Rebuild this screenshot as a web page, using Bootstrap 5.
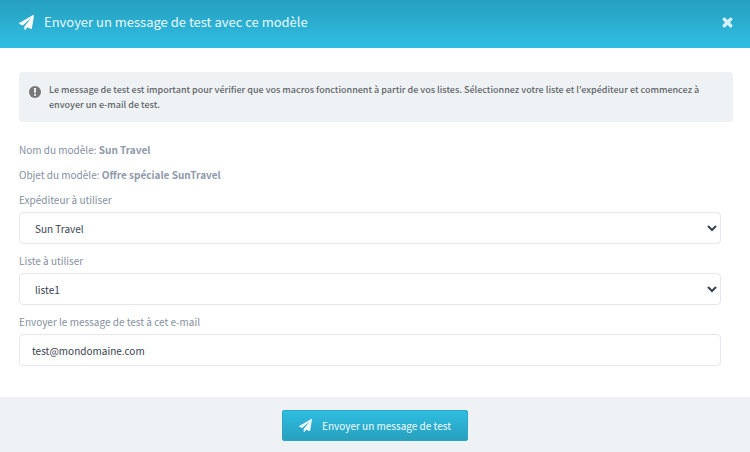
<!DOCTYPE html>
<html lang="fr">
<head>
<meta charset="utf-8">
<meta name="viewport" content="width=device-width, initial-scale=1">
<title>Envoyer un message de test</title>
<link href="https://cdn.jsdelivr.net/npm/bootstrap@5.3.0/dist/css/bootstrap.min.css" rel="stylesheet">
<style>
body { font-family: "Noto Sans CJK SC", "Noto Sans", sans-serif; font-size: 10px; color: #8590a2; background: #fff; }
.dialog-head { height: 48px; padding: 0 17px 4px 19px; background: linear-gradient(#269fbe, #2fbee4); color: #fff; }
.dialog-title { font-size: 13px; line-height: 20px; font-weight: 400; margin: 0 0 0 10px; color: #eaf8fc; }
.close-btn { line-height: 0; color: #d5f2fa; }
.dialog-body { padding: 24px 17px 31px 19px; }
.notice { background: #eef2f5; color: #63666a; border-radius: 4px; padding: 10px 24px 10px 10px; margin-bottom: 15px; font-size: 9px; font-weight: 500; line-height: 15px; }
.notice svg { color: #777; margin-top: 4px; }
.fields { margin-right: 12px; }
.line { line-height: 25px; }
.line strong { font-weight: 700; color: #8f9aab; }
.field { height: 32px; font: inherit; color: #39424f; border: 1px solid #e4e7ed; border-radius: 4px; padding: 0 12px; margin-bottom: 4px; }
select.field { -webkit-appearance: auto; appearance: auto; padding: 0 0 0 11px; }
.dialog-foot { background: #eef2f5; padding: 13px 0; min-height: 55px; }
.send-btn { height: 31px; gap: 10px; font-size: 10px; line-height: 20px; padding: 0 17px; border: 0; border-radius: 3px; color: #f2fcfe; background: linear-gradient(#2fbee2, #289fbd); box-shadow: inset 0 0 0 1px #2ba7c6; }
.send-btn:hover { color: #fff; }
</style>
<script src="https://cdn.jsdelivr.net/npm/bootstrap@5.3.0/dist/js/bootstrap.bundle.min.js"></script>
</head>
<body>
<svg class="d-none" xmlns="http://www.w3.org/2000/svg">
  <symbol id="plane" viewBox="0 0 1792 1792"><path fill="currentColor" d="M1764 11q33 24 27 64l-256 1536q-5 29-32 45-14 8-31 8-11 0-24-5l-453-185-242 295q-18 23-49 23-13 0-22-4-19-7-30.500-23.500T640 1728v-349l864-1059-1069 925-395-162q-37-14-40-55-2-40 32-59L1696 9q15-9 32-9 20 0 36 11z"/></symbol>
</svg>
<header class="dialog-head d-flex align-items-center">
  <svg width="15" height="15" aria-hidden="true"><use href="#plane"/></svg>
  <h1 class="dialog-title flex-grow-1">Envoyer un message de test avec ce modèle</h1>
  <button type="button" class="close-btn btn border-0 p-0" aria-label="Fermer">
    <svg width="11" height="11" viewBox="0 0 11 11"><path d="M2.300 2.300l6.400 6.400M8.700 2.300l-6.400 6.400" stroke="currentColor" stroke-width="3.400" stroke-linecap="round"/></svg>
  </button>
</header>
<main class="dialog-body">
  <div class="notice d-flex" role="note">
    <svg class="flex-shrink-0 me-2" width="12" height="12" viewBox="0 0 12 12" aria-hidden="true"><circle cx="6" cy="6" r="6" fill="currentColor"/><path d="M4.900 2h2.200l-.3 4.900H5.200z" fill="#eef2f5"/><circle cx="6" cy="8.900" r="1.100" fill="#eef2f5"/></svg>
    <div>Le message de test est important pour vérifier que vos macros fonctionnent à partir de vos listes. Sélectionnez votre liste et l'expéditeur et commencez à envoyer un e-mail de test.</div>
  </div>
  <form class="fields" id="send-test">
    <p class="line mb-0">Nom du modèle: <strong>Sun Travel</strong></p>
    <p class="line mb-0">Objet du modèle: <strong>Offre spéciale SunTravel</strong></p>
    <label class="line d-block" for="sender">Expéditeur à utiliser</label>
    <select class="form-control field" id="sender"><option>Sun Travel</option></select>
    <label class="line d-block" for="list">Liste à utiliser</label>
    <select class="form-control field" id="list"><option>liste1</option></select>
    <label class="line d-block" for="email">Envoyer le message de test à cet e-mail</label>
    <input class="form-control field mb-0" id="email" type="email" value="test@mondomaine.com">
  </form>
</main>
<footer class="dialog-foot d-flex justify-content-center">
  <button type="submit" form="send-test" class="send-btn btn d-flex align-items-center">
    <svg width="13" height="13" aria-hidden="true"><use href="#plane"/></svg>Envoyer un message de test
  </button>
</footer>
</body>
</html>
